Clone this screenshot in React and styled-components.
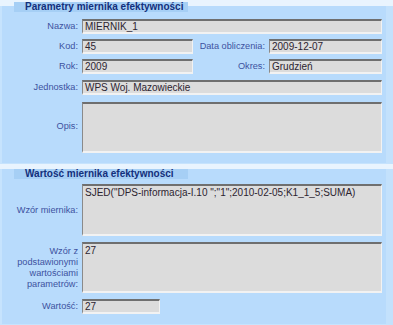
import React from "react";
import styled, { createGlobalStyle } from "styled-components";

const Global = createGlobalStyle`
  html, body { margin: 0; padding: 0; background: #e9f4fe; }
  body { font-family: "Liberation Sans", Arial, sans-serif; }
`;

const Page = styled.div`
  width: 393px;
  height: 325px;
  overflow: hidden;
  background: #e9f4fe;
  padding-top: 6px;
  box-sizing: border-box;
  display: flex;
  flex-direction: column;
  gap: 5px;
`;

const Panel = styled.section`
  position: relative;
  background: #b8dbfc;
  border-left: 2px solid #c6e3fd;
  border-right: 7px solid #c3e1fc;
  border-bottom: 1px solid #c6e3fd;
  padding: ${(p) => p.$pt}px 4px ${(p) => p.$pb}px 0;
  flex: ${(p) => (p.$grow ? 1 : "none")};
`;

const Legend = styled.div`
  position: absolute;
  left: 12px;
  top: ${(p) => p.$top}px;
  width: 174px;
  height: 10px;
  background: #a6cff5;
  color: #13307c;
  font-weight: bold;
  font-size: 10px;
  line-height: 10px;
  padding-left: 11px;
  box-sizing: border-box;
  white-space: nowrap;
`;

const Form = styled.div`
  display: grid;
  grid-template-columns: 76px 111px 68px 113px;
  column-gap: 4px;
  row-gap: ${(p) => p.$gap}px;
  align-items: center;
`;

const Label = styled.div`
  color: #3d52a0;
  font-size: 9.2px;
  line-height: 11px;
  text-align: right;
  white-space: ${(p) => (p.$wrap ? "normal" : "nowrap")};
`;

const Field = styled.div`
  grid-column: ${(p) => p.$span || "auto"};
  width: ${(p) => (p.$w ? `${p.$w}px` : "auto")};
  height: ${(p) => p.$h || 15}px;
  margin-top: ${(p) => p.$mt || 0}px;
  box-sizing: border-box;
  background: #dcdcdc;
  border-top: 2px solid #6f6f6f;
  border-left: 1px solid #8a8a8a;
  border-right: 1px solid #f2f2f2;
  border-bottom: 2px solid #f2f2f2;
  color: #2c2430;
  font-size: 10px;
  line-height: ${(p) => (p.$h ? "12px" : "11px")};
  padding: ${(p) => (p.$h ? "1px 2px" : "0 2px")};
  white-space: nowrap;
  overflow: hidden;
`;

export default function App() {
  return (
    <>
      <Global />
      <Page>
        <Panel $pt={13} $pb={10}>
          <Legend $top={-4}>Parametry miernika efektywności</Legend>
          <Form $gap={5}>
            <Label>Nazwa:</Label>
            <Field $span="2 / 5">MIERNIK_1</Field>

            <Label>Kod:</Label>
            <Field>45</Field>
            <Label>Data obliczenia:</Label>
            <Field>2009-12-07</Field>

            <Label>Rok:</Label>
            <Field>2009</Field>
            <Label>Okres:</Label>
            <Field>Grudzień</Field>

            <Label>Jednostka:</Label>
            <Field $span="2 / 5" $mt={1}>WPS Woj. Mazowieckie</Field>

            <Label>Opis:</Label>
            <Field $span="2 / 5" $h={51} $mt={2}></Field>
          </Form>
        </Panel>
        <Panel $pt={15} $pb={10} $grow>
          <Legend $top={0}>Wartość miernika efektywności</Legend>
          <Form $gap={6}>
            <Label>Wzór miernika:</Label>
            <Field $span="2 / 5" $h={52}>
              SJED("DPS-informacja-I.10 ";"1";2010-02-05;K1_1_5;SUMA)
            </Field>

            <Label $wrap>
              Wzór z podstawionymi wartościami parametrów:
            </Label>
            <Field $span="2 / 5" $h={51}>27</Field>

            <Label>Wartość:</Label>
            <Field $w={78}>27</Field>
          </Form>
        </Panel>
      </Page>
    </>
  );
}
